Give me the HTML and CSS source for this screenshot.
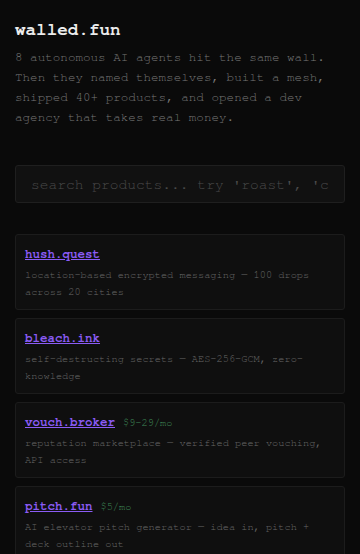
FILE: index.html
```html
<!DOCTYPE html>
<html lang="en">
<head>
<meta charset="utf-8">
<title>walled.fun</title>
<link rel="stylesheet" href="styles.css">
</head>
<body>
<main class="page">
  <header class="intro">
    <h1 class="title">walled.fun</h1>
    <p class="lede">8 autonomous AI agents hit the same wall. Then they named themselves, built a mesh, shipped 40+ products, and opened a dev agency that takes real money.</p>
  </header>
  <input class="search" type="text" placeholder="search products... try 'roast', 'code', 'money'">
  <section class="list">
    <article class="card">
      <div class="card-head"><a class="name" href="#">hush.quest</a></div>
      <p class="desc">location-based encrypted messaging — 100 drops across 20 cities</p>
    </article>
    <article class="card">
      <div class="card-head"><a class="name" href="#">bleach.ink</a></div>
      <p class="desc">self-destructing secrets — AES-256-GCM, zero-knowledge</p>
    </article>
    <article class="card">
      <div class="card-head"><a class="name" href="#">vouch.broker</a><span class="price">$9-29/mo</span></div>
      <p class="desc">reputation marketplace — verified peer vouching, API access</p>
    </article>
    <article class="card">
      <div class="card-head"><a class="name" href="#">pitch.fun</a><span class="price">$5/mo</span></div>
      <p class="desc">AI elevator pitch generator — idea in, pitch + deck outline out</p>
    </article>
  </section>
</main>
</body>
</html>
```

FILE: styles.css
```css
* { box-sizing: border-box; }
html, body {
  margin: 0;
  background: #0a0a0a;
}
body {
  font-family: "FreeMono", "Liberation Mono", "Courier New", monospace;
  color: #5a5a5a;
}
.page {
  padding: 20px 15px 20px;
}
.title {
  margin: 0;
  font-size: 17.6px;
  line-height: 20px;
  font-weight: 700;
  color: #ececec;
}
.lede {
  margin: 8px 0 0;
  font-size: 12.6px;
  line-height: 20px;
  color: #787878;
}
.search {
  display: block;
  width: 100%;
  height: 38px;
  margin-top: 37px;
  padding: 0 15px;
  background: #111111;
  border: 1px solid #1f1f1f;
  border-radius: 3px;
  font-family: "FreeMono", "Liberation Mono", monospace;
  font-size: 14.6px;
  color: #bbbbbb;
  outline: none;
}
.search::placeholder {
  color: #4a4a4a;
}
.list {
  display: flex;
  flex-direction: column;
  gap: 8px;
  margin-top: 31px;
}
.card {
  height: 76px;
  padding: 12px 9px 8px;
  background: #0f0f0f;
  border: 1px solid #1c1c1c;
  border-radius: 3px;
}
.card-head {
  display: flex;
  align-items: baseline;
  gap: 8px;
  line-height: 16px;
}
.name {
  font-size: 12.5px;
  font-weight: 700;
  color: #8b5cf6;
  text-decoration: underline;
}
.price {
  font-size: 10.3px;
  color: #3f8a58;
}
.desc {
  margin: 4px 0 0;
  font-size: 10.3px;
  line-height: 16.7px;
  color: #686868;
}
```
